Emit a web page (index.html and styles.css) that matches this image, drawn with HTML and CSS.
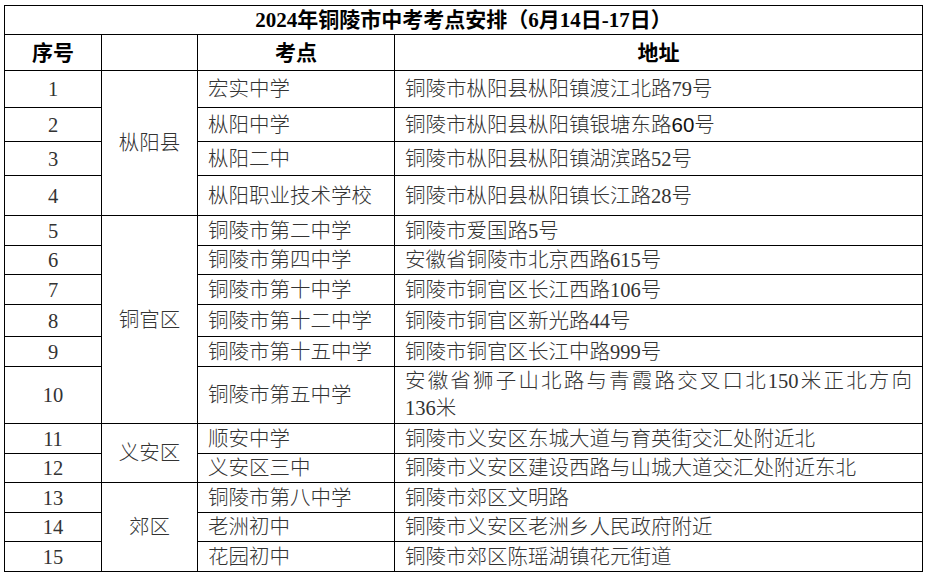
FILE: index.html
```html
<!DOCTYPE html>
<html lang="zh-CN">
<head>
<meta charset="utf-8">
<title>2024年铜陵市中考考点安排</title>
<link rel="stylesheet" href="styles.css">
</head>
<body>
<table class="sched">
  <colgroup>
    <col class="c-no">
    <col class="c-area">
    <col class="c-school">
    <col class="c-addr">
  </colgroup>
  <tr class="h29"><th colspan="4" class="title">2024年铜陵市中考考点安排（6月14日-17日）</th></tr>
  <tr class="h36"><th class="center">序号</th><th></th><th class="center">考点</th><th class="center">地址</th></tr>
  <tr class="h37"><td class="center">1</td><td class="center area" rowspan="4">枞阳县</td><td>宏实中学</td><td>铜陵市枞阳县枞阳镇渡江北路79号</td></tr>
  <tr class="h34"><td class="center">2</td><td>枞阳中学</td><td>铜陵市枞阳县枞阳镇银塘东路<span class="sans">60</span>号</td></tr>
  <tr class="h34"><td class="center">3</td><td>枞阳二中</td><td>铜陵市枞阳县枞阳镇湖滨路52号</td></tr>
  <tr class="h40"><td class="center">4</td><td>枞阳职业技术学校</td><td>铜陵市枞阳县枞阳镇长江路28号</td></tr>
  <tr class="h30"><td class="center">5</td><td class="center area" rowspan="6">铜官区</td><td>铜陵市第二中学</td><td>铜陵市爱国路5号</td></tr>
  <tr class="h29"><td class="center">6</td><td>铜陵市第四中学</td><td>安徽省铜陵市北京西路615号</td></tr>
  <tr class="h30"><td class="center">7</td><td>铜陵市第十中学</td><td>铜陵市铜官区长江西路106号</td></tr>
  <tr class="h32"><td class="center">8</td><td>铜陵市第十二中学</td><td>铜陵市铜官区新光路44号</td></tr>
  <tr class="h30"><td class="center">9</td><td>铜陵市第十五中学</td><td>铜陵市铜官区长江中路999号</td></tr>
  <tr class="h57"><td class="center">10</td><td>铜陵市第五中学</td><td class="wrap">安徽省狮子山北路与青霞路交叉口北150米正北方向<span class="nb">136米</span></td></tr>
  <tr class="h30"><td class="center">11</td><td class="center area" rowspan="2">义安区</td><td>顺安中学</td><td>铜陵市义安区东城大道与育英街交汇处附近北</td></tr>
  <tr class="h29"><td class="center">12</td><td>义安区三中</td><td>铜陵市义安区建设西路与山城大道交汇处附近东北</td></tr>
  <tr class="h30"><td class="center">13</td><td class="center area" rowspan="3">郊区</td><td>铜陵市第八中学</td><td>铜陵市郊区文明路</td></tr>
  <tr class="h29"><td class="center">14</td><td>老洲初中</td><td>铜陵市义安区老洲乡人民政府附近</td></tr>
  <tr class="h30"><td class="center">15</td><td>花园初中</td><td>铜陵市郊区陈瑶湖镇花元街道</td></tr>
</table>
</body>
</html>
```
FILE: styles.css
```css
html, body {
  margin: 0;
  padding: 0;
  background: #ffffff;
}
body {
  padding: 5px 0 0 4px;
  font-family: "Liberation Serif", "Noto Sans CJK SC", serif;
}
.sched {
  border-collapse: collapse;
  table-layout: fixed;
  width: 918px;
  color: #333333;
  font-size: 20.5px;
  font-weight: 300;
}
.c-no { width: 97px; }
.c-area { width: 96px; }
.c-school { width: 197px; }
.c-addr { width: 528px; }
.sched th,
.sched td {
  border: 1px solid #000000;
  padding: 0 0 0 10px;
  line-height: 24px;
  vertical-align: middle;
  text-align: left;
  white-space: nowrap;
  overflow: hidden;
}
.sched th {
  color: #000000;
  font-weight: bold;
  font-size: 21px;
}
.sched th.title {
  text-align: center;
  padding: 0;
}
.sched .center {
  text-align: center;
  padding: 0;
}
.sched td.wrap {
  white-space: normal;
  text-align: justify;
  padding-right: 10px;
  line-height: 27px;
}
.nb {
  white-space: nowrap;
}
.sans {
  font-family: "Liberation Sans", sans-serif;
  font-weight: normal;
  color: #111111;
}
.h29 { height: 29px; }
.h30 { height: 30px; }
.h32 { height: 32px; }
.h34 { height: 34px; }
.h36 { height: 36px; }
.h37 { height: 37px; }
.h40 { height: 40px; }
.h57 { height: 57px; }
```
